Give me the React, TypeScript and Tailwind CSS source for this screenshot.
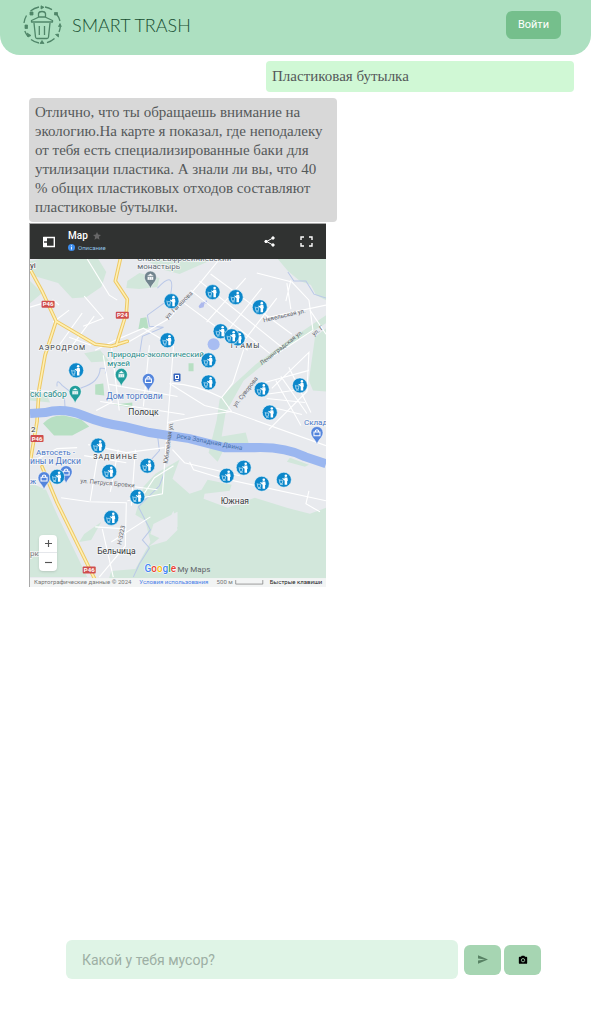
import React from "react";

const bins: [number, number][] = [
  [172, 301], [213, 292], [236, 297], [260, 307], [168, 340], [238, 338],
  [221, 331], [232, 336], [209, 360], [77, 370], [209, 382], [262, 389],
  [300, 385], [270, 412], [99, 445], [148, 465], [110, 471], [58, 476],
  [244, 467], [227, 475], [262, 483], [284, 479], [138, 496], [112, 517],
];

const streets = [
  "M31 307 L54 300 L60 305", "M60 345 L83 313 M68 352 L95 316 M54 322 L70 310 M70 337 L92 345",
  "M85 296 L104 318 L84 326", "M88 259 L110 295 L118 300", "M127 343 L170 318 L202 281 L220 259",
  "M96 350 L116 340 L144 328 L174 346", "M104 355 L112 402 L97 410", "M101 401 L185 414 M110 384 L178 396",
  "M112 345 L120 410 M150 345 L144 406 M174 346 L168 424", "M170 383 L205 405 L234 412 L326 445",
  "M168 422 L202 415 L232 411", "M232 411 L222 397 L233 383 L244 349", "M222 397 Q196 384 172 383",
  "M200 281 L282 347 M191 290 L270 353 M182 301 L248 350 M211 274 L292 334",
  "M207 322 L246 278 M226 333 L262 288 M244 341 L277 298", "M257 273 L292 282 L309 300 L313 330 L264 362",
  "M287 283 L291 309 M291 280 L286 301 M264 318 L326 305 M310 310 L326 334",
  "M272 388 L309 352 L307 391 L269 429 M265 382 L309 370 M258 395 L307 388 M276 380 L301 425 M289 367 L311 412",
  "M281 376 L307 413 M267 398 L305 402 M273 407 L302 414", "M168 424 L163 493 L128 500",
  "M89 444 L127 452 L165 447 M85 455 L127 462 M90 480 L158 489 M99 452 L91 500 M119 449 L111 491 M136 449 L132 505",
  "M62 497 L90 501 L127 502 L126 545 L100 576", "M190 461 L194 469 L220 477 L326 500",
  "M173 449 L185 462 L240 475 M309 490 L306 503 L320 511", "M31 462 L58 448 L78 447 M31 390 L53 391",
  "M103 528 L114 576 M112 541 L151 516 M96 526 L126 528 M174 465 L155 477 L144 494",
];

function TrashLogo() {
  return (
    <svg className="size-10" viewBox="0 0 40 40" fill="none" stroke="#4f8568" strokeWidth="1.3" strokeLinejoin="round" aria-hidden="true">
      <path d="M8.5 6A18.3 18.3 0 0 1 17 2M23 2A18.3 18.3 0 0 1 30 4.6M34.5 9A18.3 18.3 0 0 1 38 16M38.3 22A18.3 18.3 0 0 1 37 27M32.5 33.5A18.3 18.3 0 0 1 25 37.6M17 38A18.3 18.3 0 0 1 9 34.5M6 31.5A18.3 18.3 0 0 1 2.8 26M2 18A18.3 18.3 0 0 1 4.5 10.5" />
      <path d="M9.5 17V15.5L17 12H23L30.5 15.5V17ZM16.5 12V8.5Q17 6.5 20 6.5T23.5 8.5V12M12 18L13.5 32Q13.7 33.5 15 33.5H25Q26.3 33.5 26.5 32L28 18M17.3 21V30M22.5 21V30" />
      <path d="M3 20H5.5V23.5H3ZM38 18.5L39.3 21.5H36.5ZM20 35.5L22 38.5H18ZM8 7H11V10H8ZM19 .8L22 2.3L19 4ZM32.5 7.5H35.5V10H32.5ZM33.5 29.5L36.5 29V32ZM5 28L9 30.5L6 32Z" fill="#4f8568" strokeWidth=".8" />
    </svg>
  );
}

function Bin({ x, y }: { x: number; y: number }) {
  return (
    <g transform={`translate(${x} ${y})`}>
      <circle r="7.5" fill="#0c87ca" stroke="#f4f8fa" strokeWidth=".6" />
      <circle cx="2" cy="-4" r="1.3" fill="#fff" />
      <path d="M.5-2.3H3.5L4 1L3.3 1.3V5H.8V1L-1.6-1L-1-1.7L.6-.8Z" fill="#fff" />
      <path d="M-4.6-.5L-3.8 3.7H-1.5L-1 .5H-4M-3.8 4.7H-1" fill="none" stroke="#b9e1f5" strokeWidth=".8" />
    </g>
  );
}

function Pin({ x, y, color, museum }: { x: number; y: number; color: string; museum?: boolean }) {
  return (
    <g transform={`translate(${x} ${y})`}>
      <path d="M0 11C-1 6-6 4-6-1A6 6 0 1 1 6-1C6 4 1 6 0 11Z" fill={color} stroke="#fff" strokeWidth=".5" />
      {museum ? (
        <path d="M-3.5-2L0-4.5L3.5-2ZM-3-1.5H3V2H-3ZM-1-.8V1.4M1-.8V1.4" fill="#fff" stroke={color} strokeWidth=".4" />
      ) : (
        <path d="M-3-1.5H3V2.2H-3ZM-1.5-1.5V-3Q0-4.5 1.5-3V-1.5" fill="none" stroke="#fff" strokeWidth="1" />
      )}
    </g>
  );
}

function Road({ x, y, name }: { x: number; y: number; name: string }) {
  return (
    <g>
      <rect x={x - 6.5} y={y - 3.5} width="13" height="7" rx="1" fill="#cf4d4d" />
      <text x={x} y={y + 2} fontSize="6" fontWeight="700" fill="#fff" textAnchor="middle">{name}</text>
    </g>
  );
}

function CityMap() {
  return (
    <svg className="block w-full" viewBox="31 259 295 327" fontFamily="Roboto, sans-serif" role="img" aria-label="Полоцк">
      <rect x="31" y="259" width="295" height="327" fill="#e8eaee" />
      <g fill="#d2e7db">
        <path d="M42 259H99L107 272L102 287L87 297L73 298L59 283L35 276L31 268V261ZM31 281L43 293L31 303ZM128 281L140 273L160 278L158 287L140 289L127 288ZM144 259H215L205 263L180 274L165 270Z" />
        <path d="M278 259H326V300L316 295L311 285L300 281L288 271ZM289 340L326 315V323L280 351L244 380L226 412L222 436L246 432L249 443L225 447L218 461L209 452L217 420L220 399L234 384L256 364ZM315 337L326 328V391L313 390L309 380Z" />
        <path d="M31 482L47 489L59 516L76 551L88 576H31ZM144 486L156 473L180 459L173 478L190 493L202 489L208 479L232 484L230 490L205 493L204 498L228 507L255 497L287 507L310 513L326 507V586H107L112 570L136 568L151 541L146 520L136 514ZM102 521L85 533L80 541L92 539ZM31 389L37 394L47 393L51 402L31 400ZM85 353L101 350L110 361L92 362ZM290 457L309 464L305 466L287 461Z" />
      </g>
      <path d="M160 537L174 510L178 529L167 540L150 545ZM154 523L178 511L178 526L162 538L151 533Z" fill="#e8eaee" />
      <path d="M44 423Q52 414 65 415L82 419L90 426L73 435H55ZM141 318L147 317L149 328L139 329ZM96 384L104 383L105 395L96 394ZM189 363H194V371H189ZM114 404L133 402V407Z" fill="#b7dfc3" />
      <g fill="none" stroke="#bac8e8" strokeWidth="1">
        <path d="M158 288Q178 267 170 299L148 315L150 326L164 327L143 336L140 355M58 386Q57 377 63 385L72 392L83 387Q100 382 101 368Q109 367 106 373M65 391L66 409M288 272L294 281L306 281L314 294L326 298M166 469L160 485L139 506L151 529L143 539L150 547L140 563L134 576M158 434L160 450L151 460" />
      </g>
      <path d="M199 306L202 302L205 303L204 307L200 308ZM203 302L207 300L208 304Z" fill="#adb9ed" />
      <circle cx="214" cy="344" r="6" fill="#a8bdf2" />
      <g fill="none" stroke="#fff" strokeWidth="1.1">{streets.map((d) => <path key={d} d={d} />)}</g>
      <g fill="none" strokeLinecap="round" strokeLinejoin="round">
        <path d="M31 269L43 291L57 321L96 344L112 346L128 341M57 321L46 355L40 389L38 421L31 462M121 259L116 281L128 299L127 313L117 345M43 466L58 502L96 579" stroke="#edc865" strokeWidth="3.6" />
        <path d="M31 269L43 291L57 321L96 344L112 346L128 341M57 321L46 355L40 389L38 421L31 462M121 259L116 281L128 299L127 313L117 345M43 466L58 502L96 579" stroke="#fff0b3" strokeWidth="1.6" />
      </g>
      <path d="M31 413L46 412Q65 407 84 415T125 426L150 432L190 438L225 447L255 447Q285 446 305 456L326 463" fill="none" stroke="#9bb7f0" strokeWidth="9" />
      <g fill="#5d6269" fontSize="6">
        <text transform="rotate(-45 168 319)" x="168" y="319">ул. Гагашова</text>
        <text transform="rotate(-13 264 322)" x="264" y="322">Невельская ул.</text>
        <text transform="rotate(-38 262 365)" x="262" y="365">Ленинградская ул.</text>
        <text transform="rotate(-52 236 407)" x="236" y="407">ул. Суворова</text>
        <text transform="rotate(-82 168 463)" x="168" y="463">Юбилейная ул.</text>
        <text transform="rotate(5 81 482)" x="81" y="482">ул. Петруся Бровки</text>
        <text transform="rotate(-79 122 544)" x="122" y="544">Н-3223</text>
        <text transform="rotate(-38 314 336)" x="314" y="336">ул. Г</text>
        <text transform="rotate(11 177 437)" x="177" y="437" fontSize="6.5" fill="#4771aa">река Западная Двина</text>
      </g>
      <g fontSize="8" fill="#35383b" stroke="#f6f7f8" strokeWidth="1.5" paintOrder="stroke">
        <text x="31" y="268">yi</text><text x="32" y="431">2</text>
        <text x="138" y="261" fill="#5f6972">Спасо-Евфросиниевский</text>
        <text x="138" y="269" fill="#5f6972">монастырь</text>
        <text x="40" y="350" fontSize="7" letterSpacing="1">АЭРОДРОМ</text>
        <text x="231" y="348" fontSize="7" letterSpacing="1">ГРАМЫ</text>
        <text x="94" y="458" fontSize="7" letterSpacing="1">ЗАДВИНЬЕ</text>
        <text x="129" y="414" fontSize="8.5">Полоцк</text><text x="221" y="503" fontSize="8.5">Южная</text><text x="98" y="553" fontSize="8.5">Бельчица</text>
        <g fill="#258b89"><text x="108" y="357">Природно-экологический</text><text x="108" y="366">музей</text><text x="31" y="397" fontSize="8.5">скі сабор</text></g>
        <g fill="#4875c5"><text x="107" y="399" fontSize="8.5">Дом торговли</text><text x="304" y="424">Склад</text><text x="37" y="454">Автосеть -</text><text x="31" y="463" fontSize="8.5">ины и Диски</text><text x="31" y="483">ж</text></g>
        <text x="31" y="555" fill="#777">рки</text>
      </g>
      <Road x={49} y={304} name="P46" /><Road x={123} y={315} name="P24" /><Road x={38} y={438} name="P46" /><Road x={90} y={569} name="P46" />
      <Pin x={151} y={278} color="#71848e" museum />
      <Pin x={122} y={375} color="#209d9b" museum />
      <Pin x={76} y={392} color="#209d9b" museum />
      <Pin x={149} y={380} color="#5485dc" /><Pin x={317} y={433} color="#5485dc" /><Pin x={67} y={472} color="#5485dc" /><Pin x={45} y={478} color="#5485dc" />
      <rect x="174" y="373" width="7" height="8" rx="1" fill="#3564bd" /><path d="M176 375H179V378H176ZM176 380H179" fill="none" stroke="#fff" />
      {bins.map(([x, y]) => <Bin key={`${x}-${y}`} x={x} y={y} />)}
      <text x="145" y="571" fontSize="10" fontWeight="500" stroke="#fff" strokeWidth="1" paintOrder="stroke"><tspan fill="#4285f4">G</tspan><tspan fill="#ea4335">o</tspan><tspan fill="#fbbc05">o</tspan><tspan fill="#4285f4">g</tspan><tspan fill="#34a853">l</tspan><tspan fill="#ea4335">e</tspan></text>
      <text x="178" y="571" fontSize="8" fill="#5f6368">My Maps</text>
      <rect x="31" y="577" width="295" height="9" fill="#f2f4f4" />
      <g fontSize="6"><text x="35" y="583" fill="#777">Картографические данные © 2024</text><text x="140" y="583" fill="#4a80e8">Условия использования</text><text x="217" y="583" fill="#777">500 м</text><text x="270" y="583" fill="#222">Быстрые клавиши</text></g>
      <path d="M236 579V583H263V579" stroke="#777" strokeWidth=".7" fill="none" />
    </svg>
  );
}

export default function App() {
  return (
    <div className="flex min-h-screen flex-col bg-white font-['Roboto',sans-serif]">
      <header className="flex h-[55px] items-center justify-between rounded-b-[20px] bg-[#ade0c1] pr-[30px] pb-[5px] pl-[22px]">
        <a href="#" className="flex items-center gap-[10px] text-[#174e31]">
          <TrashLogo />
          <h1 className="font-['Lato',sans-serif] text-[18px] font-light">SMART TRASH</h1>
        </a>
        <button type="button" className="h-7 rounded-md bg-[#75bf8c] px-3 pt-px text-[11px] text-white">Войти</button>
      </header>
      <main className="flex flex-1 flex-col gap-[6px] pt-[6px] pr-[17px] pl-[29px] font-['Liberation_Serif',serif] text-[15px] leading-[19px] text-[#55595a]">
        <p className="w-[308px] max-w-full self-end rounded bg-[#d0f8d5] p-[6px]">Пластиковая бутылка</p>
        <div>
          <p className="w-[308px] max-w-full rounded bg-[#d8d8d8] px-[6px] py-[5px]">
            Отлично, что ты обращаешь внимание на экологию.На карте я показал, где неподалеку от тебя есть специализированные баки для утилизации пластика. А знали ли вы, что 40 % общих пластиковых отходов составляют пластиковые бутылки.
          </p>
          <section aria-label="Map" className="relative mt-px w-[297px] max-w-full border-t border-l border-[#a8a8a8] font-['Roboto',sans-serif]">
            <div className="flex h-[35px] items-center bg-[#303231] px-[13px] text-white">
              <button type="button" aria-label="Панель">
                <svg className="h-3 w-3" viewBox="0 0 12 12" fill="none" stroke="white" strokeWidth="1.4"><path d="M1 1.5H11.3V10.5H1Z" /><path d="M2 1V11" strokeWidth="4" /><path d="M1 6H4" stroke="#303231" /></svg>
              </button>
              <div className="ml-[13px] flex-1">
                <h2 className="flex items-center gap-[5px] text-[10px] leading-3 font-medium">Map
                  <svg className="size-2" viewBox="0 0 10 10" fill="#666"><path d="M5 0L6.5 3.2L10 3.6L7.4 6L8.1 9.6L5 7.8L1.9 9.6L2.6 6L0 3.6L3.5 3.2Z" /></svg>
                </h2>
                <a href="#" className="flex items-center gap-[3px] text-[6px] leading-3 text-[#91c5e8]">
                  <svg className="size-[7px]" viewBox="0 0 8 8"><circle cx="4" cy="4" r="4" fill="#3d8ded" /><path d="M4 1.5V2.5M4 3.3V6.3" stroke="white" /></svg>Описание
                </a>
              </div>
              <button type="button" aria-label="Поделиться" className="mr-[25px]">
                <svg className="size-[11px]" viewBox="0 0 11 11" fill="white" stroke="white"><path d="M9 2L2.5 5.5L9 9" fill="none" /><circle cx="9" cy="2" r="1.2" /><circle cx="2" cy="5.5" r="1.2" /><circle cx="9" cy="9" r="1.2" /></svg>
              </button>
              <button type="button" aria-label="Во весь экран">
                <svg className="h-[11px] w-[13px]" viewBox="0 0 13 11" fill="none" stroke="white" strokeWidth="1.4"><path d="M1 4V1H4M9 1H12V4M12 7V10H9M4 10H1V7" /></svg>
              </button>
            </div>
            <CityMap />
            <div className="absolute bottom-4 left-[9px] flex w-[18px] flex-col divide-y divide-gray-200 rounded-sm bg-white text-[#555] shadow">
              {[["Увеличить", "M4 0V8M0 4H8"], ["Уменьшить", "M0 4H8"]].map(([label, d]) => (
                <button key={label} type="button" aria-label={label} className="grid h-[18px] place-items-center"><svg className="size-[7px]" viewBox="0 0 8 8" stroke="currentColor" strokeWidth="1.3"><path d={d} /></svg></button>
              ))}
            </div>
          </section>
        </div>
      </main>
      <form className="mb-[43px] flex items-center pr-[50px] pl-[66px]" onSubmit={(e) => e.preventDefault()}>
        <input aria-label="Какой у тебя мусор?" placeholder="Какой у тебя мусор?" className="mr-[6px] h-[39px] min-w-0 flex-1 rounded-md bg-[#dff4e6] px-4 text-sm placeholder:text-[#9dafa4] focus:outline-none" />
        <button type="submit" aria-label="Отправить" className="mr-[3px] grid h-[30px] w-[37px] place-items-center rounded-md bg-[#a6d5b2]">
          <svg className="h-[9px] w-[10px]" viewBox="0 0 21 18" fill="#588264"><path d="M0 0L21 9L0 18V11L15 9L0 7Z" /></svg>
        </button>
        <button type="button" aria-label="Камера" className="grid h-[30px] w-[37px] place-items-center rounded-md bg-[#a6d5b2]">
          <svg className="size-[10px]" viewBox="0 0 24 24"><path d="M9 2L7 4H4Q2 4 2 6V19Q2 21 4 21H20Q22 21 22 19V6Q22 4 20 4H17L15 2Z" /><circle cx="12" cy="12.5" r="4" fill="none" stroke="#a6d5b2" strokeWidth="2" /></svg>
        </button>
      </form>
    </div>
  );
}
